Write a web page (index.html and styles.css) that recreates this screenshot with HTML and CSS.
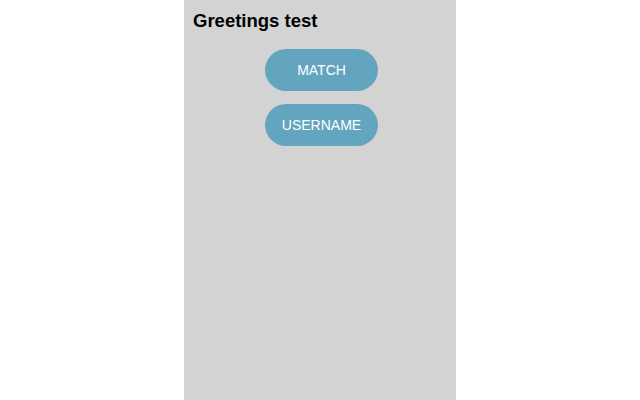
FILE: index.html
```html
<!DOCTYPE html>
<html lang="en">
<head>
<meta charset="utf-8">
<title>Greetings test</title>
<link rel="stylesheet" href="styles.css">
</head>
<body>
<main class="panel">
  <h1 class="title">Greetings test</h1>
  <div class="actions">
    <button class="btn" type="button">MATCH</button>
    <button class="btn" type="button">USERNAME</button>
  </div>
</main>
</body>
</html>
```

FILE: styles.css
```css
html, body {
  margin: 0;
  padding: 0;
  background: #ffffff;
  height: 100%;
}
body {
  display: flex;
  justify-content: center;
  font-family: "Liberation Sans", Arial, sans-serif;
}
.panel {
  width: 272px;
  height: 400px;
  background: #d3d3d3;
  box-sizing: border-box;
  padding: 10px 9px 0 9px;
}
.title {
  margin: 0;
  font-size: 18.5px;
  line-height: 22px;
  font-weight: 700;
  color: #000;
}
.actions {
  display: flex;
  flex-direction: column;
  align-items: center;
  gap: 13px;
  margin-top: 17px;
  padding-left: 3px;
}
.btn {
  width: 113px;
  height: 42px;
  border: none;
  border-radius: 21px;
  background: #63a5be;
  color: #ffffff;
  font-family: "Liberation Sans", Arial, sans-serif;
  font-size: 14px;
  padding: 0;
}
```
